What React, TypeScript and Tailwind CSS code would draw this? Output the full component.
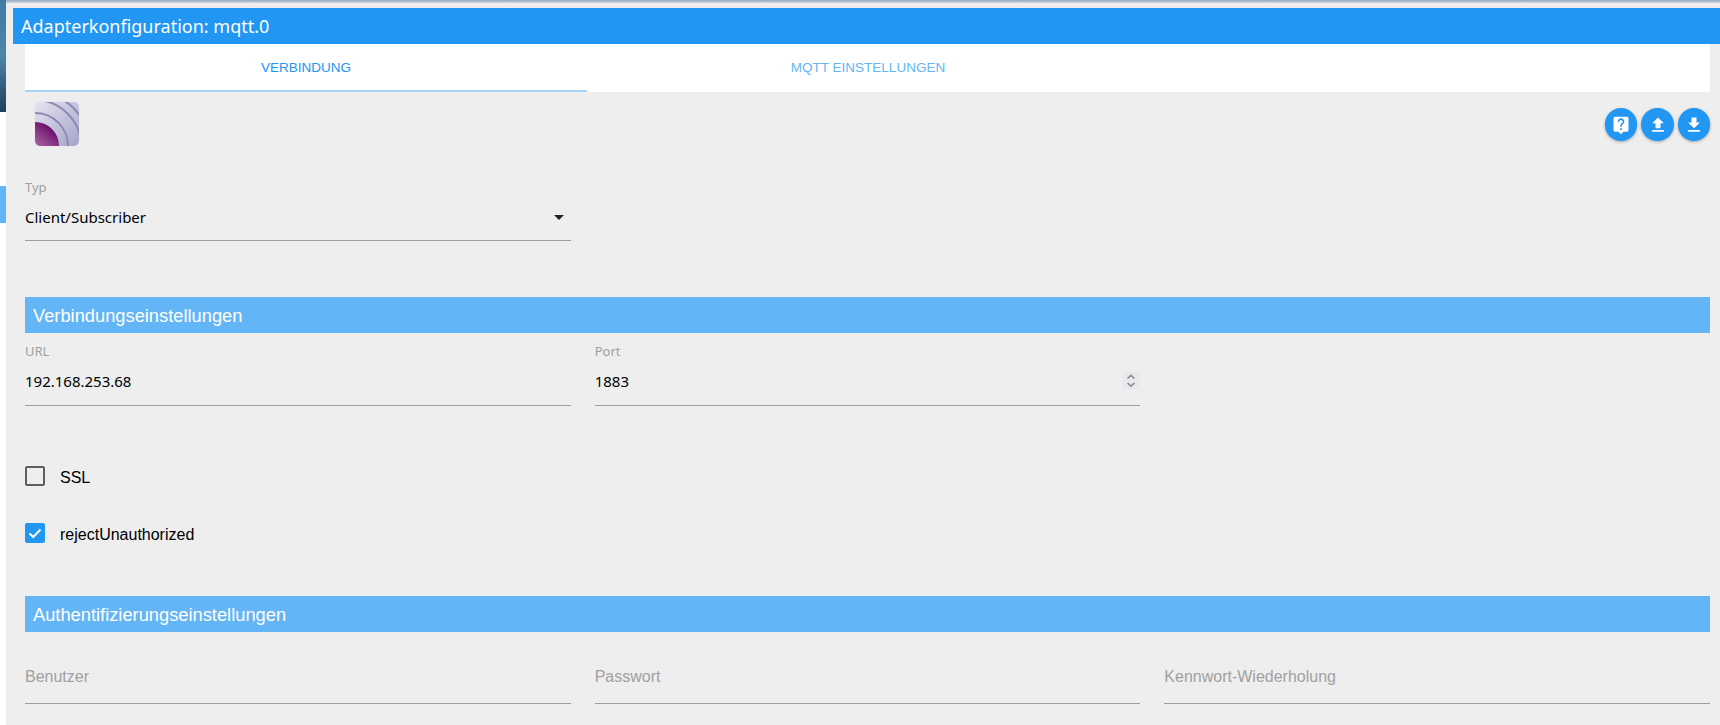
const uiFont = "font-['Noto_Sans','Open_Sans',sans-serif]";
const arial = "font-['Liberation_Sans',Arial,sans-serif]";

function RoundButton({ d, cls }: { d: string; cls: string }) {
  return (
    <div className={`flex h-[33px] items-center justify-center rounded-full bg-[#2196f3] shadow-[0_1px_3px_rgba(0,0,0,0.3)] ${cls}`}>
      <svg viewBox="0 0 24 24" className="h-[20px] w-[20px] fill-white">
        <path d={d} />
      </svg>
    </div>
  );
}

function Field({ label, value, height, arrow, spin }: { label: string; value: string; height: string; arrow?: boolean; spin?: boolean }) {
  return (
    <div className={`relative border-b border-[#9e9e9e] ${height}`}>
      <div className={`${uiFont} pt-[2px] text-[13px] leading-[16px] text-[#a0a0a0]`}>{label}</div>
      <div className={`${uiFont} mt-[12px] text-[15px] leading-[20px] text-black`}>{value}</div>
      {arrow && <div className="absolute right-[7px] top-[38px] h-0 w-0 border-x-[5px] border-t-[5px] border-x-transparent border-t-[#222]" />}
      {spin && (
        <div className="absolute right-0 top-[31px] flex h-[18px] w-[18px] items-center justify-center bg-[#e9e9ed]">
          <svg viewBox="0 0 18 18" className="h-[18px] w-[18px] fill-none stroke-[#8a8a94] stroke-[1.6]">
            <path d="M5.5 6.5 9 3.3 12.5 6.5" />
            <path d="M5.5 11 9 14.2 12.5 11" />
          </svg>
        </div>
      )}
    </div>
  );
}

function Section({ title }: { title: string }) {
  return (
    <div className={`${arial} flex h-[36px] items-center bg-[#64b5f6] pl-[8px] pt-[1px] text-[18.3px] text-white`}>{title}</div>
  );
}

function Placeholder({ label }: { label: string }) {
  return (
    <div className={`${arial} h-[41px] border-b border-[#9e9e9e] pt-[2px] text-[16px] leading-[24px] text-[#a0a0a0]`}>{label}</div>
  );
}

export default function App() {
  return (
    <div className="flex h-[725px] w-[1720px] overflow-hidden bg-white">
      {/* streifen vom hintergrund links */}
      <div className="flex w-[6px] shrink-0 flex-col">
        <div className="h-[112px] bg-gradient-to-b from-[#3f7ba3] via-[#4f86aa] to-[#1f3f5c]" />
        <div className="h-[74px] bg-white" />
        <div className="h-[37px] bg-[#64b5f6]" />
      </div>

      <div className="flex-1 bg-[#eeeeee]">
        <div className="h-[3px] bg-gradient-to-b from-[#8fa9c4] to-[#d8d8d8]" />
        <div className="h-[5px]" />
        <div className={`${uiFont} ml-[7px] flex h-[36px] items-center bg-[#2196f3] pl-[8px] pt-[1px] text-[18px] text-white`}>
          Adapterkonfiguration: mqtt.0
        </div>

        <div className="pl-[19px] pr-[10px]">
          {/* tabs */}
          <div className={`${arial} flex h-[48px] bg-white text-[13.5px]`}>
            <div className="flex w-[562px] items-center justify-center border-b-2 border-[#a6d5fa] pt-[2px] text-[#2196f3]">VERBINDUNG</div>
            <div className="flex w-[562px] items-center justify-center text-[#64b5f6]">MQTT EINSTELLUNGEN</div>
          </div>

          <div className="flex h-[63px] items-start justify-between pt-[9px]">
            <svg viewBox="0 0 46 46" className="ml-[9px] h-[46px] w-[46px]">
              <defs>
                <linearGradient id="bg" x1="0" y1="0" x2="1" y2="1">
                  <stop offset="0" stopColor="#e6e3f0" />
                  <stop offset="1" stopColor="#a5a4c8" />
                </linearGradient>
                <linearGradient id="core" gradientUnits="userSpaceOnUse" x1="18" y1="26" x2="3" y2="45">
                  <stop offset="0" stopColor="#680868" />
                  <stop offset="1" stopColor="#a8649f" />
                </linearGradient>
                <clipPath id="round">
                  <rect x="1" y="1" width="44" height="44" rx="5.5" />
                </clipPath>
              </defs>
              <rect x="0" y="0" width="46" height="46" rx="7" fill="#efe6f5" />
              <g clipPath="url(#round)">
                <rect x="1" y="1" width="44" height="44" fill="url(#bg)" />
                <circle cx="1" cy="45" r="24" fill="url(#core)" />
                <circle cx="1" cy="45" r="33" fill="none" stroke="#8b8ab4" strokeWidth="2" />
                <circle cx="1" cy="45" r="46" fill="none" stroke="#8b8ab4" strokeWidth="2" />
                <circle cx="1" cy="45" r="54" fill="none" stroke="#8b8ab4" strokeWidth="2" />
              </g>
            </svg>
            <div className="mt-[7px] flex gap-x-[4px]">
              <RoundButton cls="w-[32px]" d="M19 2H5c-1.11 0-2 .9-2 2v14c0 1.1.89 2 2 2h4l3 3 3-3h4c1.1 0 2-.9 2-2V4c0-1.1-.9-2-2-2zm-6 16h-2v-2h2v2zm2.07-7.75l-.9.92C13.45 11.9 13 12.5 13 14h-2v-.5c0-1.1.45-2.1 1.17-2.83l1.24-1.26c.37-.36.59-.86.59-1.41 0-1.1-.9-2-2-2s-2 .9-2 2H8c0-2.21 1.79-4 4-4s4 1.79 4 4c0 .88-.36 1.68-.93 2.25z" />
              <RoundButton cls="w-[33px]" d="M9 16h6v-6h4l-7-7-7 7h4zm-4 2h14v2H5z" />
              <RoundButton cls="w-[32px]" d="M19 9h-4V3H9v6H5l7 7 1.41-1.41L19 9zM5 18v2h14v-2H5z" />
            </div>
          </div>

          <div className="grid grid-cols-3 gap-x-6">
            <div className="mt-[22px]"><Field label="Typ" value="Client/Subscriber" height="h-[64px]" arrow /></div>
          </div>

          <div className="mt-[56px]"><Section title="Verbindungseinstellungen" /></div>

          <div className="grid grid-cols-3 gap-x-6 pt-[8px]">
            <Field label="URL" value="192.168.253.68" height="h-[65px]" />
            <Field label="Port" value="1883" height="h-[65px]" spin />
          </div>

          <div className={`${arial} mt-[60px] flex h-[20px] items-center text-[16px] text-black`}>
            <div className="h-[20px] w-[20px] rounded-[2px] border-2 border-[#5f5f5f]" />
            <span className="ml-[15px] mt-[3px]">SSL</span>
          </div>
          <div className={`${arial} mt-[37px] flex h-[20px] items-center text-[16px] text-black`}>
            <div className="flex h-[20px] w-[20px] items-center justify-center rounded-[2px] bg-[#2196f3]">
              <svg viewBox="0 0 20 20" className="h-[20px] w-[20px] fill-none stroke-white stroke-[2]">
                <path d="M4.5 10.5 8.2 14 15.5 6.5" />
              </svg>
            </div>
            <span className="ml-[15px] mt-[3px]">rejectUnauthorized</span>
          </div>

          <div className="mt-[53px]"><Section title="Authentifizierungseinstellungen" /></div>

          <div className="grid grid-cols-3 gap-x-6 pt-[31px]">
            <Placeholder label="Benutzer" />
            <Placeholder label="Passwort" />
            <Placeholder label="Kennwort-Wiederholung" />
          </div>
        </div>
      </div>
    </div>
  );
}
